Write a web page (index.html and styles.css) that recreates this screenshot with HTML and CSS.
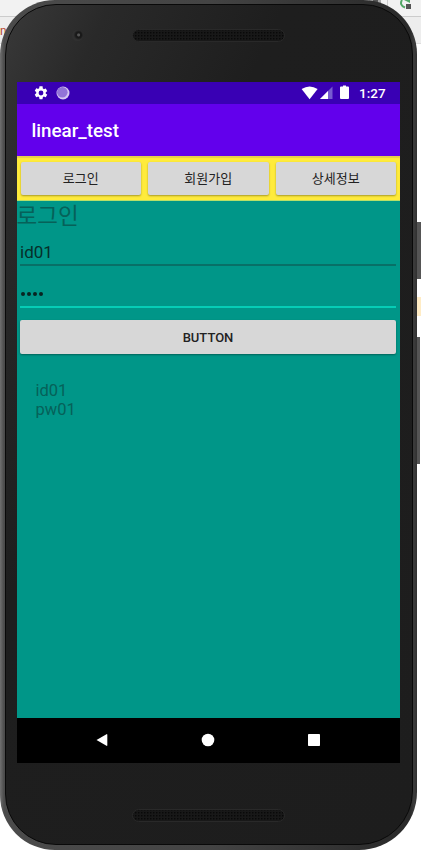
FILE: index.html
```html
<!DOCTYPE html>
<html lang="ko">
<head>
<meta charset="utf-8">
<title>linear_test</title>
<link rel="stylesheet" href="styles.css">
</head>
<body>
<div class="desktop">
  <div class="toolbar"></div>
  <div class="tabs"></div>
  <span class="code">n</span>
  <svg class="tool-icons" width="54" height="16" viewBox="0 0 54 16">
    <path d="M2 0h12v5H2z" fill="#aaa"/><path d="M6 0h5v4H6z" fill="#555"/>
    <path d="M20.500 0v16" stroke="#ccc"/>
    <path d="M35 0q-3 5 3 7.500" fill="none" stroke="#52a866" stroke-width="2"/>
    <path d="M37 0h6v3z" fill="#52a866"/><path d="M39 4h5v5h-5z" fill="#555"/>
  </svg>
  <i class="side power"></i>
  <i class="mark"></i>
  <i class="side volume"></i>
</div>
<div class="phone">
  <div class="face">
    <header class="top">
      <span class="camera"></span>
      <svg class="speaker" width="153" height="13"><defs><pattern id="holes" width="3" height="3" patternUnits="userSpaceOnUse"><rect width="3" height="3" fill="#181818"/><rect width="1.500" height="1.500" fill="#090909"/></pattern></defs><rect x=".5" y=".5" width="152" height="12" rx="6" fill="url(#holes)" stroke="#292929"/></svg>
    </header>
    <main class="screen">
      <div class="status">
        <svg class="gear" width="16" height="16" viewBox="0 0 24 24"><path fill="#fff" d="M19.140 12.940c.04-.3.060-.61.060-.94s-.02-.64-.07-.94l2.030-1.580a.49.490 0 0 0 .12-.61l-1.920-3.320a.49.490 0 0 0-.59-.22l-2.390.96c-.5-.38-1.030-.7-1.620-.94l-.36-2.540A.48.480 0 0 0 13.920 2h-3.840a.48.480 0 0 0-.47.410l-.36 2.540c-.59.240-1.130.57-1.620.94l-2.390-.96a.48.480 0 0 0-.59.220L2.740 8.470a.48.480 0 0 0 .12.610l2.030 1.580c-.05.3-.09.630-.09.940s.02.640.07.940l-2.030 1.580a.49.490 0 0 0-.12.610l1.920 3.320c.12.220.37.290.59.220l2.390-.96c.5.380 1.030.7 1.620.94l.36 2.540c.05.240.24.410.48.410h3.840c.24 0 .44-.17.470-.41l.36-2.540c.59-.24 1.130-.56 1.620-.94l2.390.96c.22.080.47 0 .59-.22l1.920-3.320a.48.480 0 0 0-.12-.61zM12 15.600a3.600 3.600 0 1 1 0-7.200 3.600 3.600 0 0 1 0 7.200z"/></svg>
        <svg class="orb" width="14" height="14"><circle cx="7" cy="7" r="6.500" fill="#d6c7f1"/><circle cx="6.300" cy="6.300" r="5.300" fill="#9274d8"/></svg>
        <svg class="signals" width="50" height="16" viewBox="0 0 50 16"><path d="M.6 4Q8.600-1 16.600 4L8.600 14.200z" fill="#fff"/><path d="M31.500 1.500V14H19z" fill="#765bd0"/><path d="M27 6v8h-8z" fill="#fff"/><path d="M42 1.500V.5h3v1h2q1 0 1 1v10.500q0 1-1 1h-7q-1 0-1-1V2.500q0-1 1-1z" fill="#fff"/></svg>
        <span class="clock">1:27</span>
      </div>
      <div class="appbar">linear_test</div>
      <nav class="menu"><button>로그인</button><button>회원가입</button><button>상세정보</button></nav>
      <section class="content">
        <h1>로그인</h1>
        <div class="field id">id01</div>
        <div class="field pw"><i></i><i></i><i></i><i></i></div>
        <button class="submit">BUTTON</button>
        <p class="result">id01<br>pw01</p>
      </section>
      <footer class="navbar">
        <svg width="14" height="14"><path d="M1.500 7 11.500 1.200q.8-.3.800.5v10.600q0 .8-.8.500z" fill="#fff"/></svg>
        <svg width="14" height="14"><circle cx="7" cy="7" r="6.300" fill="#fff"/></svg>
        <svg width="14" height="14"><rect x="1" y="1" width="12" height="12" rx=".7" fill="#fff"/></svg>
      </footer>
    </main>
    <div class="bottom"><svg class="speaker" width="153" height="13"><rect x=".5" y=".5" width="152" height="12" rx="6" fill="url(#holes)" stroke="#292929"/></svg></div>
  </div>
</div>
</body>
</html>
```
FILE: styles.css
```css
* { box-sizing: border-box; }
body { margin: 0; width: 421px; height: 851px; overflow: hidden; background: #fff; font-family: Roboto, "Noto Sans CJK KR", sans-serif; }
.desktop { position: absolute; inset: 0; overflow: hidden; }
.toolbar { height: 17px; background: #f2f2f2; border-bottom: 1px solid #ccc; }
.tabs { height: 27px; background: #ededed; border-bottom: 1px solid #ddd; }
.code { position: absolute; left: 0; top: 24px; font-size: 12px; color: #b6482f; }
.tool-icons { position: absolute; left: 367px; top: 0; }
.side { position: absolute; right: 0; background: #555; }
.power { top: 222px; width: 4px; height: 57px; }
.mark { position: absolute; top: 297px; right: 0; width: 4px; height: 19px; background: #ffecc5; }
.volume { top: 337px; right: 1px; width: 3px; height: 127px; }
.phone { position: relative; width: 417px; height: 850px; padding: 4px 4px 5px 5px; border-radius: 55px 54px 58px 55px; background: linear-gradient(90deg, #707070 0, #4b4b4b 4px, #444 50%, #292929 410px, #3c3c3c 414px, #303030 417px); }
.face { height: 841px; padding: 0 11px; border: 1px solid #090909; border-radius: 51px 50px 54px 51px; background: linear-gradient(115deg, #393939 0, #292929 13%, #1e1e1e 35%, #1d1d1d 100%); }
.top { height: 77px; display: flex; align-items: flex-start; }
.camera { width: 11px; height: 11px; margin: 25px 0 0 55px; border-radius: 50%; background: radial-gradient(circle at 60% 45%, #555 0 1px, #191919 2px 3px, #303030 5px); }
.speaker { display: block; margin: 24px 0 0 49px; }
.screen { width: 383px; height: 681px; display: flex; flex-direction: column; }
.status { height: 22px; background: #3900b4; display: flex; align-items: center; color: #fff; }
.gear { margin-left: 16px; }
.orb { margin-left: 7px; }
.signals { margin-left: 231px; margin-top: 0; }
.clock { margin-left: 8px; font-size: 13.500px; font-weight: 500; line-height: 16px; }
.appbar { height: 52px; padding-left: 14.500px; background: #6200ec; color: #fff; font-size: 18.800px; font-weight: 500; line-height: 54px; }
.menu { height: 45px; padding: 6px 4px 6px 3.500px; display: flex; gap: 7px; background: #ffeb3b; box-shadow: inset 0 2px 1px #e4cf4a, inset 0 -1px #b7df69; }
button { border: 0; border-radius: 2px; margin: 0; padding: 0; background: #d7d7d7; color: #222; font-family: inherit; box-shadow: 0 1px 2px rgba(0,0,0,.35); }
.menu button { flex: 1; font-size: 13px; line-height: 33px; }
.content { height: 517px; background: #009688; padding: 0 4px 0 3px; overflow: hidden; }
h1 { margin: 0 0 0 -3.500px; height: 32px; font-size: 22.500px; font-weight: 400; line-height: 31px; color: #066159; }
.field { height: 33px; border-bottom: 2px solid #087067; font-size: 17px; line-height: 38px; color: #062f2b; }
.pw { height: 42px; border-bottom-color: #06cdb6; display: flex; gap: 2px; padding: 26px 0 0 1px; }
.pw i { width: 4px; height: 4px; border-radius: 50%; background: #082421; }
.submit { display: block; width: 100%; height: 34px; margin-top: 12px; font-size: 13px; font-weight: 500; }
.result { margin: 27px 0 0 15.500px; font-size: 16.500px; line-height: 19px; color: #066159; }
.navbar { height: 45px; padding-right: 2px; background: #000; display: flex; justify-content: center; align-items: center; gap: 92px; }
.navbar svg { margin-top: -1px; }
.bottom { padding-left: 115px; }
.bottom .speaker { margin: 46px 0 0; }
```
